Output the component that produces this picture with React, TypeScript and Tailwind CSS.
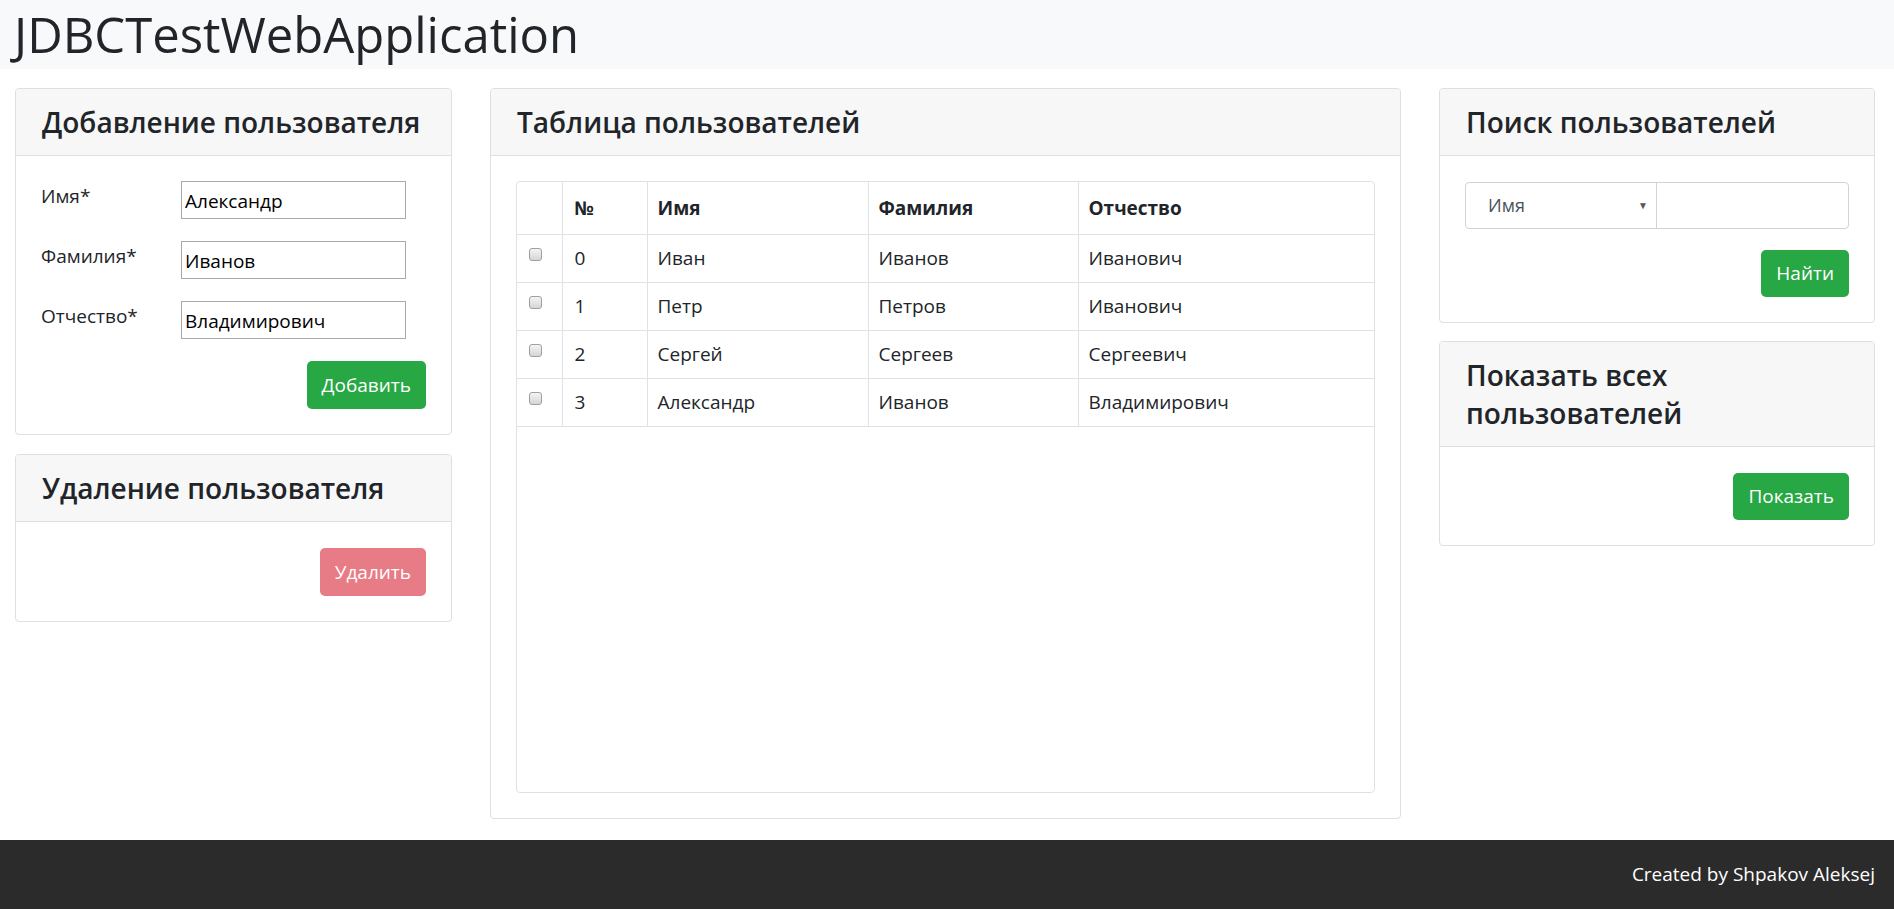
import { ReactNode } from 'react';

interface User {
  id: number;
  firstName: string;
  lastName: string;
  patronymic: string;
}

const users: User[] = [
  { id: 0, firstName: 'Иван', lastName: 'Иванов', patronymic: 'Иванович' },
  { id: 1, firstName: 'Петр', lastName: 'Петров', patronymic: 'Иванович' },
  { id: 2, firstName: 'Сергей', lastName: 'Сергеев', patronymic: 'Сергеевич' },
  { id: 3, firstName: 'Александр', lastName: 'Иванов', patronymic: 'Владимирович' },
];

const Card = ({
  title,
  children,
  bodyClassName = '',
}: {
  title: string;
  children: ReactNode;
  bodyClassName?: string;
}) => (
  <div className="border border-[#dfdfdf] rounded-[4px] bg-white overflow-hidden">
    <div className="bg-[#f7f7f7] border-b border-[#dfdfdf] px-[26px] pt-[14px] pb-[14px]">
      <h3 className="text-[28px] leading-[38px] font-semibold text-[#212529]">{title}</h3>
    </div>
    <div className={`px-[25px] pt-[25px] pb-[25px] ${bodyClassName}`}>{children}</div>
  </div>
);

const FormRow = ({ label, value }: { label: string; value: string }) => (
  <div className="flex items-start">
    <label className="w-[140px] pt-[3px] text-[19px] leading-[24px]">{label}</label>
    <input
      readOnly
      value={value}
      className="w-[225px] h-[38px] border border-[#a9a9a9] px-[3px] pt-[2px] text-[19px] text-black outline-none"
    />
  </div>
);

const Checkbox = () => (
  <span className="block w-[13px] h-[13px] rounded-[3px] border border-[#a0a0a0] bg-gradient-to-b from-[#f4f4f4] to-[#d6d6d6]" />
);

export default function App() {
  return (
    <div className="min-h-screen flex flex-col bg-white text-[#212529] font-['Open_Sans',sans-serif]">
      {/* Header */}
      <header className="h-[69px] bg-[#f8f9fa] flex items-center pl-[14px]">
        <h1 className="text-[49px] leading-none font-medium text-[#212529]">JDBCTestWebApplication</h1>
      </header>

      <main className="flex-1 grid grid-cols-[437px_911px_436px] gap-x-[38px] px-[15px] pt-[19px] pb-[20px] items-start">
        {/* Left column */}
        <div className="flex flex-col gap-[19px]">
          <Card title="Добавление пользователя">
            <div className="flex flex-col gap-[22px]">
              <FormRow label="Имя*" value="Александр" />
              <FormRow label="Фамилия*" value="Иванов" />
              <FormRow label="Отчество*" value="Владимирович" />
              <div className="flex justify-end">
                <button className="h-[48px] px-[15px] rounded-[5px] bg-[#28a745] text-white text-[19px]">
                  Добавить
                </button>
              </div>
            </div>
          </Card>
          <Card title="Удаление пользователя" bodyClassName="pt-[26px]">
            <div className="flex justify-end">
              <button className="h-[48px] px-[15px] rounded-[5px] bg-[#e87c86] text-white text-[19px] cursor-not-allowed">
                Удалить
              </button>
            </div>
          </Card>
        </div>

        {/* Users table */}
        <Card title="Таблица пользователей">
          <div className="h-[612px] border border-[#dee2e6] rounded-[4px] overflow-hidden">
            <table className="w-full border-collapse text-[19px]">
              <thead>
                <tr className="h-[52px] border-b border-[#dee2e6] text-left">
                  <th className="w-[45px] border-r border-[#dee2e6]" />
                  <th className="w-[85px] border-r border-[#dee2e6] px-[12px] font-bold">№</th>
                  <th className="w-[221px] border-r border-[#dee2e6] px-[10px] font-bold">Имя</th>
                  <th className="w-[210px] border-r border-[#dee2e6] px-[10px] font-bold">Фамилия</th>
                  <th className="px-[10px] font-bold">Отчество</th>
                </tr>
              </thead>
              <tbody>
                {users.map((u) => (
                  <tr key={u.id} className="h-[48px] border-b border-[#dee2e6]">
                    <td className="border-r border-[#dee2e6] pl-[12px] align-top pt-[13px]">
                      <Checkbox />
                    </td>
                    <td className="border-r border-[#dee2e6] px-[12px]">{u.id}</td>
                    <td className="border-r border-[#dee2e6] px-[10px]">{u.firstName}</td>
                    <td className="border-r border-[#dee2e6] px-[10px]">{u.lastName}</td>
                    <td className="px-[10px]">{u.patronymic}</td>
                  </tr>
                ))}
              </tbody>
            </table>
          </div>
        </Card>

        {/* Right column */}
        <div className="flex flex-col gap-[18px]">
          <Card title="Поиск пользователей" bodyClassName="pt-[26px]">
            <div className="flex h-[47px] border border-[#ced4da] rounded-[4px]">
              <div className="w-[191px] flex items-center justify-between pl-[22px] pr-[8px] border-r border-[#ced4da] text-[18px] text-[#495057]">
                <span>Имя</span>
                <span className="text-[10px] text-[#555]">▼</span>
              </div>
              <input className="flex-1 min-w-0 outline-none px-[12px] text-[18px] rounded-r-[4px]" />
            </div>
            <div className="flex justify-end mt-[21px]">
              <button className="h-[47px] px-[15px] rounded-[5px] bg-[#28a745] text-white text-[19px]">
                Найти
              </button>
            </div>
          </Card>
          <Card title="Показать всех пользователей" bodyClassName="pt-[26px]">
            <div className="flex justify-end">
              <button className="h-[47px] px-[15px] rounded-[5px] bg-[#28a745] text-white text-[19px]">
                Показать
              </button>
            </div>
          </Card>
        </div>
      </main>

      {/* Footer */}
      <footer className="h-[69px] bg-[#2b2b2b] flex items-center justify-end pr-[19px]">
        <span className="text-white text-[19px]">Created by Shpakov Aleksej</span>
      </footer>
    </div>
  );
}
